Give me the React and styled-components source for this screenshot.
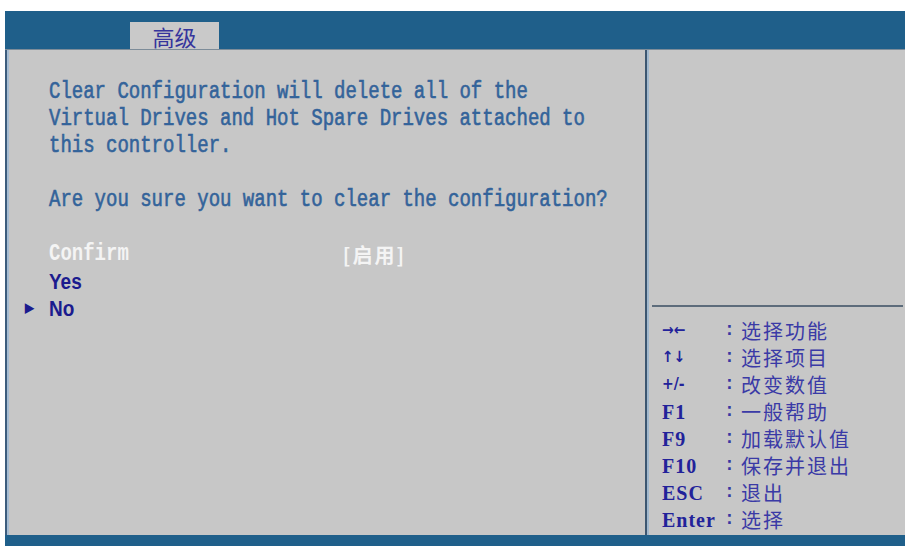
import React from "react";
import styled, { createGlobalStyle } from "styled-components";

const GlobalStyle = createGlobalStyle`
  html, body {
    margin: 0;
    padding: 0;
    background: #ffffff;
  }
`;

const helpKeys = [
  { key: "→←", label: "选择功能", symbol: true },
  { key: "↑↓", label: "选择项目", symbol: true },
  { key: "+/-", label: "改变数值", symbol: true },
  { key: "F1", label: "一般帮助" },
  { key: "F9", label: "加载默认值" },
  { key: "F10", label: "保存并退出" },
  { key: "ESC", label: "退出" },
  { key: "Enter", label: "选择" },
];

class App extends React.Component {
  render() {
    return (
      <>
        <GlobalStyle />
        <Frame>
          <Screen>
            <Header>
              <Tab>高级</Tab>
            </Header>
            <Body>
              <MainPanel>
                <Line>Clear Configuration will delete all of the</Line>
                <Line>Virtual Drives and Hot Spare Drives attached to</Line>
                <Line>this controller.</Line>
                <Blank />
                <Line>Are you sure you want to clear the configuration?</Line>
                <Blank />
                <SettingRow>
                  <Line light>Confirm</Line>
                  <Value>[启用]</Value>
                </SettingRow>
                <Option>Yes</Option>
                <Option selected>No</Option>
              </MainPanel>
              <SidePanel>
                <HelpArea />
                <Divider />
                <KeyList>
                  {helpKeys.map((item) => (
                    <KeyRow key={item.key}>
                      <KeyName symbol={item.symbol}>{item.key}</KeyName>
                      <Colon>:</Colon>
                      <KeyLabel>{item.label}</KeyLabel>
                    </KeyRow>
                  ))}
                </KeyList>
              </SidePanel>
            </Body>
          </Screen>
        </Frame>
      </>
    );
  }
}

const Frame = styled.div`
  width: 905px;
  height: 546px;
  padding: 11px 0 0 5px;
  box-sizing: border-box;
`;

const Screen = styled.div`
  height: 535px;
  display: flex;
  flex-direction: column;
  background-color: #1f5f8a;
  padding-bottom: 11px;
  box-sizing: border-box;
`;

const Header = styled.div`
  height: 38px;
  display: flex;
  align-items: flex-end;
  padding-left: 125px;
  flex-shrink: 0;
`;

const Tab = styled.div`
  width: 89px;
  height: 27px;
  background-color: #c9c9c9;
  display: flex;
  align-items: center;
  justify-content: center;
  font-family: "Noto Sans CJK SC", sans-serif;
  font-size: 22px;
  line-height: 1;
  color: #35359c;
  padding-top: 1px;
  box-sizing: border-box;
`;

const Body = styled.div`
  flex: 1;
  display: grid;
  grid-template-columns: 642px 1fr;
  background-color: #c7c7c7;
  border-top: 1px solid #7d8c99;
`;

const MainPanel = styled.div`
  border-left: 2px solid #3d5d7d;
  border-right: 2px solid #3c5670;
  box-shadow: inset 2px 0 0 #a7bdd2;
  padding: 29px 0 0 42px;
  box-sizing: border-box;
`;

const Line = styled.div`
  height: 27px;
  font-family: "Liberation Mono", monospace;
  font-size: 19px;
  line-height: 27px;
  white-space: pre;
  color: ${(props) => (props.light ? "#f4f4f4" : "#33639a")};
  font-weight: ${(props) => (props.light ? 700 : 400)};
  -webkit-text-stroke: ${(props) => (props.light ? "0" : "0.5px")};
  transform: scaleY(1.22);
`;

const Blank = styled.div`
  height: 27px;
`;

const SettingRow = styled.div`
  display: flex;
  align-items: center;
  gap: 214px;
`;

const Value = styled.span`
  font-family: "Noto Sans CJK SC", sans-serif;
  font-size: 20px;
  line-height: 27px;
  letter-spacing: 2px;
  font-weight: 700;
  color: #f4f4f4;
`;

const Option = styled.div`
  position: relative;
  height: 27px;
  font-family: "Liberation Sans", sans-serif;
  font-weight: 700;
  font-size: 19px;
  line-height: 27px;
  color: #1b1b8e;
  transform: scaleY(1.12);

  &::before {
    content: ${(props) => (props.selected ? '"▶"' : "none")};
    position: absolute;
    left: -24px;
    top: 0;
    font-size: 12px;
  }
`;

const SidePanel = styled.div`
  display: flex;
  flex-direction: column;
  border-left: 2px solid #a1b8cd;
`;

const HelpArea = styled.div`
  height: 255px;
`;

const Divider = styled.div`
  height: 2px;
  margin: 0 2px 0 3px;
  background-color: #5d6c7b;
`;

const KeyList = styled.div`
  padding: 10px 0 0 13px;
`;

const KeyRow = styled.div`
  height: 27px;
  display: flex;
  align-items: center;
  color: #22229a;
`;

const KeyName = styled.span`
  width: 62px;
  font-family: ${(props) =>
    props.symbol ? '"DejaVu Sans", sans-serif' : '"Liberation Serif", serif'};
  font-weight: 700;
  font-size: ${(props) => (props.symbol ? "14px" : "20px")};
  letter-spacing: ${(props) => (props.symbol ? "0" : "1px")};
  line-height: 27px;
  transform: scaleY(1.1);
  transform-origin: left center;
`;

const Colon = styled.span`
  width: 17px;
  font-family: "Liberation Mono", monospace;
  font-weight: 700;
  font-size: 18px;
  line-height: 27px;
  color: #3838a2;
`;

const KeyLabel = styled.span`
  font-family: "Noto Sans CJK SC", sans-serif;
  font-size: 20px;
  line-height: 27px;
  letter-spacing: 2px;
  color: #3a3aa6;
`;

export default App;
